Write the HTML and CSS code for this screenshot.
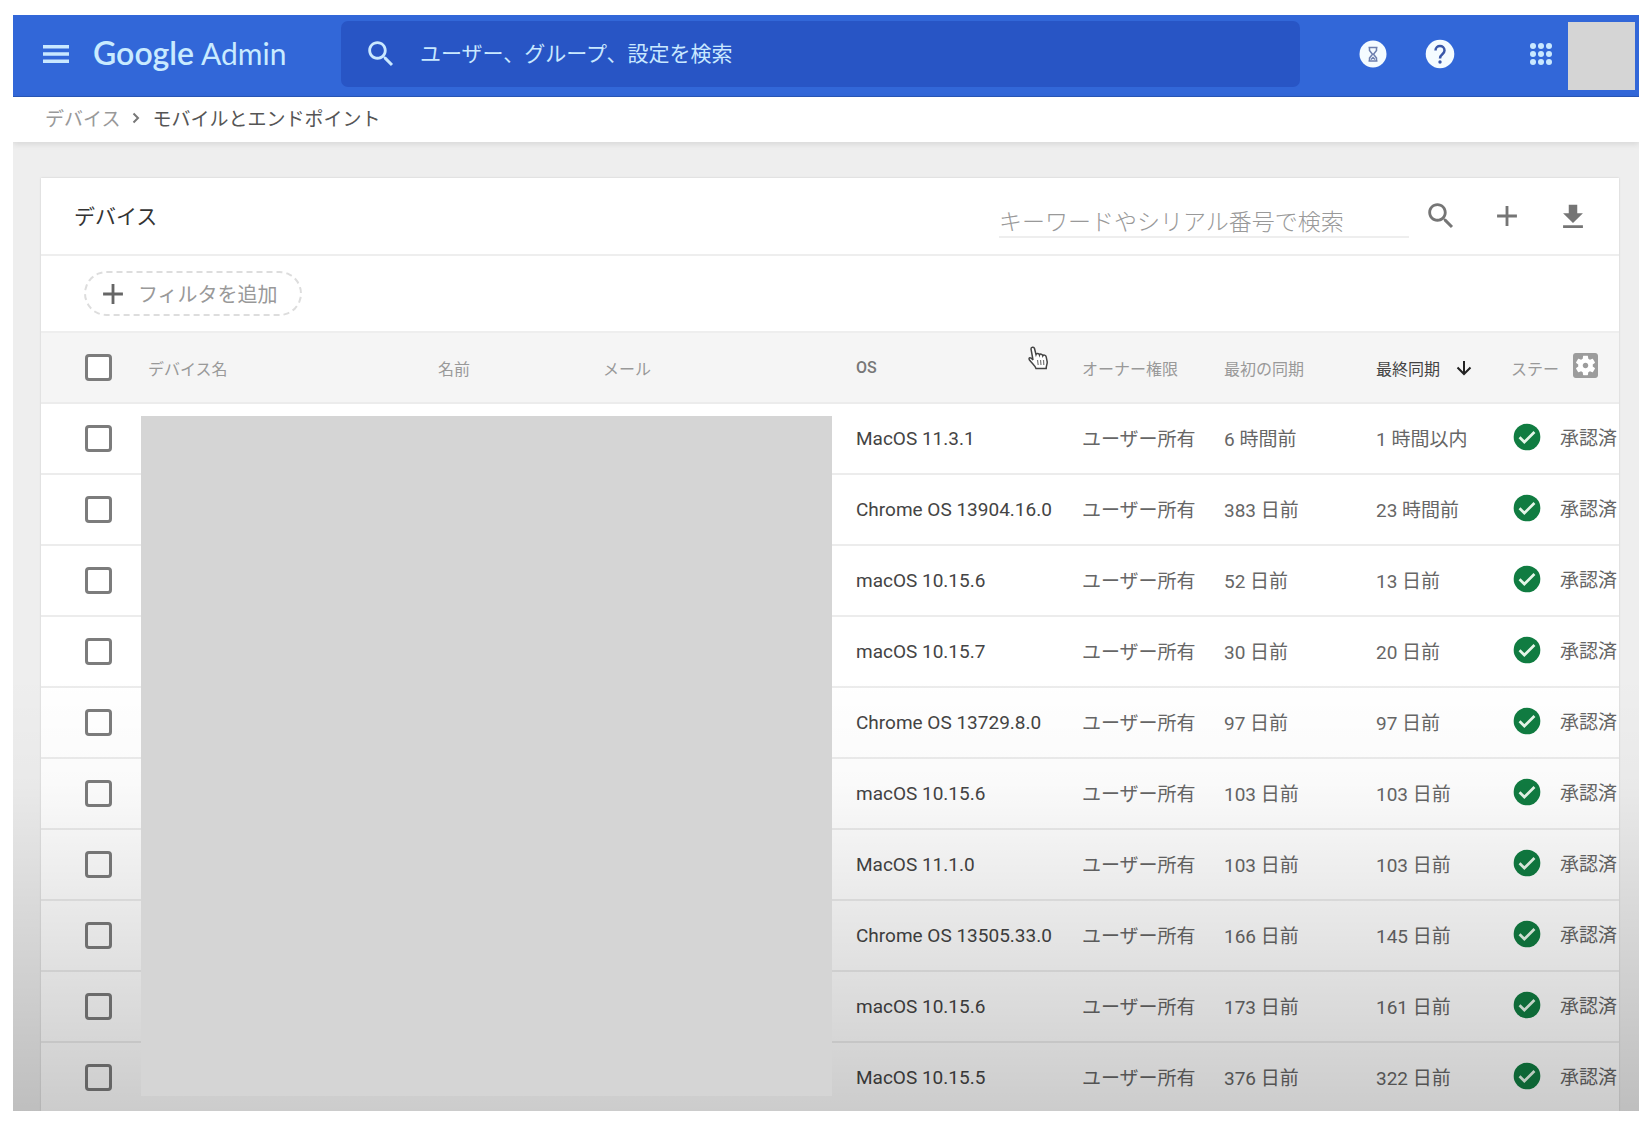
FILE: index.html
```html
<!DOCTYPE html>
<html lang="ja">
<head>
<meta charset="utf-8">
<title>デバイス - Google Admin</title>
<link rel="stylesheet" href="styles.css">
</head>
<body>
<svg class="sprite" aria-hidden="true">
  <symbol id="search" viewBox="0 0 24 24"><path d="M15.5 14h-.79l-.28-.27C15.41 12.59 16 11.11 16 9.5 16 5.91 13.09 3 9.5 3S3 5.91 3 9.5 5.91 16 9.5 16c1.61 0 3.09-.59 4.23-1.57l.27.28v.79l5 4.99L20.49 19l-4.99-5zm-6 0C7.01 14 5 11.99 5 9.5S7.01 5 9.5 5 14 7.01 14 9.5 11.99 14 9.5 14z"/></symbol>
  <symbol id="plus" viewBox="0 0 24 24"><path d="M19 13h-6v6h-2v-6H5v-2h6V5h2v6h6z"/></symbol>
  <symbol id="check" viewBox="0 0 24 24"><circle cx="12" cy="12" r="10"/><path d="M6.4 12.2l3.600 3.600 7.600-7.600" fill="none" stroke="#e4f6e8" stroke-width="2"/></symbol>
</svg>
<div class="app">
  <header class="topbar">
    <div class="brand">
      <button class="icon-button" aria-label="メニュー"><svg class="icon" viewBox="0 0 34 34"><path d="M4 8h26v3.500H4zM4 15.300h26v3.500H4zM4 22.600h26v3.500H4z"/></svg></button>
      <a class="logo" href="#"><span class="logo-google">Google</span><span class="logo-admin">Admin</span></a>
    </div>
    <label class="global-search">
      <svg class="icon"><use href="#search"/></svg>
      <input type="text" aria-label="検索" placeholder="ユーザー、グループ、設定を検索">
    </label>
    <div class="actions">
      <button class="icon-button" aria-label="タスク"><svg class="icon" viewBox="0 0 34 34"><circle cx="17" cy="17" r="13.5" fill="#f4fbff"/><path d="M12.5 10.5h9M12.5 24h9M13.5 10.5v3l3 3.7-3 3.8v3M20.500 10.500v3l-3 3.700 3 3.800v3M15 22.500l2-2 2 2" fill="none" stroke="#6d7fae" stroke-width="1.500"/></svg></button>
      <button class="icon-button" aria-label="ヘルプ"><svg class="icon" viewBox="0 0 34 34"><circle cx="17" cy="17" r="14.3" fill="#f4fbff"/><path d="M12.500 13.500c0-6 9-6 9 0 0 4-4.500 3.500-4.500 8" fill="none" stroke="#3a57a8" stroke-width="2.500"/><circle cx="17" cy="25" r="1.700" fill="#3a57a8"/></svg></button>
      <button class="icon-button apps" aria-label="アプリ"><svg class="icon" viewBox="0 0 34 34"><circle cx="9" cy="9" r="3"/><circle cx="17" cy="9" r="3"/><circle cx="25" cy="9" r="3"/><circle cx="9" cy="17" r="3"/><circle cx="17" cy="17" r="3"/><circle cx="25" cy="17" r="3"/><circle cx="9" cy="25" r="3"/><circle cx="17" cy="25" r="3"/><circle cx="25" cy="25" r="3"/></svg></button>
      <div class="avatar"></div>
    </div>
  </header>
  <nav class="breadcrumb" aria-label="パンくずリスト">
    <a href="#">デバイス</a>
    <svg class="chevron" viewBox="0 0 8 12"><path d="M1.500 1.500L6 6l-4.500 4.500" fill="none" stroke="#777" stroke-width="2"/></svg>
    <span>モバイルとエンドポイント</span>
  </nav>
  <main class="content">
    <section class="card">
      <div class="card-head">
        <h1>デバイス</h1>
        <input class="keyword" type="text" aria-label="キーワード" placeholder="キーワードやシリアル番号で検索">
        <div class="tools">
          <button class="icon-button" aria-label="検索"><svg class="icon"><use href="#search"/></svg></button>
          <button class="icon-button" aria-label="追加"><svg class="icon"><use href="#plus"/></svg></button>
          <button class="icon-button" aria-label="ダウンロード"><svg class="icon" viewBox="0 0 24 24"><path d="M19 10h-4V4H9v6H5l7 7 7-7zM5 18.500v2h14v-2H5z"/></svg></button>
        </div>
      </div>
      <div class="filters">
        <button class="add-filter"><svg class="icon"><use href="#plus"/></svg>フィルタを追加</button>
      </div>
      <div class="table-area">
        <table class="devices">
          <colgroup><col class="c-check"><col><col class="c-name"><col class="c-mail"><col class="c-os"><col class="c-owner"><col class="c-first"><col class="c-last"><col class="c-status"></colgroup>
          <thead>
            <tr><th><input type="checkbox" aria-label="すべて選択"></th><th>デバイス名</th><th>名前</th><th>メール</th><th class="os-head">OS</th><th>オーナー権限</th><th>最初の同期</th>
              <th class="sorted"><span class="sort-label">最終同期<svg class="sort" viewBox="0 0 16 16"><path d="M8 1v13M1.500 7.500L8 14l6.500-6.500" fill="none" stroke="#222" stroke-width="2"/></svg></span></th>
              <th><span class="status-head">ステー<button class="icon-button settings" aria-label="列の設定"><svg class="gear" viewBox="3 3 18 18"><path fill="#fff" d="M5 5h14v14H5z"/><path fill="#9c9c9c" d="M12 10c-1.100 0-2 .9-2 2s.9 2 2 2 2-.9 2-2-.9-2-2-2zm7-7H5c-1.110 0-2 .9-2 2v14c0 1.100.89 2 2 2h14c1.110 0 2-.9 2-2V5c0-1.100-.89-2-2-2zm-1.750 9c0 .23-.02.46-.05.68l1.480 1.160c.13.11.17.3.08.45l-1.400 2.420c-.09.15-.27.21-.43.15l-1.740-.7c-.36.28-.76.51-1.180.69l-.26 1.850c-.03.17-.18.3-.35.3h-2.800c-.17 0-.32-.13-.35-.29l-.26-1.850c-.43-.18-.82-.41-1.180-.69l-1.740.7c-.16.06-.34 0-.43-.15l-1.400-2.420c-.09-.15-.05-.34.08-.45l1.480-1.160c-.03-.23-.05-.46-.05-.69 0-.23.02-.46.05-.68l-1.480-1.160c-.13-.11-.17-.3-.08-.45l1.400-2.420c.09-.15.27-.21.43-.15l1.740.7c.36-.28.76-.51 1.180-.69l.26-1.850c.03-.17.18-.3.35-.3h2.800c.17 0 .32.13.35.29l.26 1.850c.43.18.82.41 1.180.69l1.740-.7c.16-.06.34 0 .43.15l1.400 2.420c.09.15.05.34-.08.45l-1.480 1.160c.03.23.05.46.05.69z"/></svg></button></span></th></tr>
          </thead>
          <tbody>
            <tr><td><input type="checkbox" aria-label="選択"></td><td></td><td></td><td></td><td class="os">MacOS 11.3.1</td><td>ユーザー所有</td><td>6 時間前</td><td>1 時間以内</td><td><span class="status"><svg class="ok"><use href="#check"/></svg>承認済</span></td></tr>
            <tr><td><input type="checkbox" aria-label="選択"></td><td></td><td></td><td></td><td class="os">Chrome OS 13904.16.0</td><td>ユーザー所有</td><td>383 日前</td><td>23 時間前</td><td><span class="status"><svg class="ok"><use href="#check"/></svg>承認済</span></td></tr>
            <tr><td><input type="checkbox" aria-label="選択"></td><td></td><td></td><td></td><td class="os">macOS 10.15.6</td><td>ユーザー所有</td><td>52 日前</td><td>13 日前</td><td><span class="status"><svg class="ok"><use href="#check"/></svg>承認済</span></td></tr>
            <tr><td><input type="checkbox" aria-label="選択"></td><td></td><td></td><td></td><td class="os">macOS 10.15.7</td><td>ユーザー所有</td><td>30 日前</td><td>20 日前</td><td><span class="status"><svg class="ok"><use href="#check"/></svg>承認済</span></td></tr>
            <tr><td><input type="checkbox" aria-label="選択"></td><td></td><td></td><td></td><td class="os">Chrome OS 13729.8.0</td><td>ユーザー所有</td><td>97 日前</td><td>97 日前</td><td><span class="status"><svg class="ok"><use href="#check"/></svg>承認済</span></td></tr>
            <tr><td><input type="checkbox" aria-label="選択"></td><td></td><td></td><td></td><td class="os">macOS 10.15.6</td><td>ユーザー所有</td><td>103 日前</td><td>103 日前</td><td><span class="status"><svg class="ok"><use href="#check"/></svg>承認済</span></td></tr>
            <tr><td><input type="checkbox" aria-label="選択"></td><td></td><td></td><td></td><td class="os">MacOS 11.1.0</td><td>ユーザー所有</td><td>103 日前</td><td>103 日前</td><td><span class="status"><svg class="ok"><use href="#check"/></svg>承認済</span></td></tr>
            <tr><td><input type="checkbox" aria-label="選択"></td><td></td><td></td><td></td><td class="os">Chrome OS 13505.33.0</td><td>ユーザー所有</td><td>166 日前</td><td>145 日前</td><td><span class="status"><svg class="ok"><use href="#check"/></svg>承認済</span></td></tr>
            <tr><td><input type="checkbox" aria-label="選択"></td><td></td><td></td><td></td><td class="os">macOS 10.15.6</td><td>ユーザー所有</td><td>173 日前</td><td>161 日前</td><td><span class="status"><svg class="ok"><use href="#check"/></svg>承認済</span></td></tr>
            <tr><td><input type="checkbox" aria-label="選択"></td><td></td><td></td><td></td><td class="os">MacOS 10.15.5</td><td>ユーザー所有</td><td>376 日前</td><td>322 日前</td><td><span class="status"><svg class="ok"><use href="#check"/></svg>承認済</span></td></tr>
          </tbody>
        </table>
        <div class="redaction"></div>
        <svg class="pointer" viewBox="0 0 22 24"><path d="M6 14L4 3c0-2 3-2.500 3.500-.5L9 8.500c.5-1.500 3-1.500 3.500.5.500-1.500 3-1 3.300.8.700-1.300 3-.8 3.400 1l1 5c.3 2-1 3.500-1 6.700H9c-1-3-4-5-6.500-8.500C1 11.500 3.500 10.500 6 14z" fill="#fff" stroke="#444" stroke-width="1.500"/><path d="M10.500 14l.7 5M13.500 14l.5 5M16.500 14l.3 5" stroke="#777" stroke-width="1.200"/></svg>
      </div>
    </section>
  </main>
</div>
</body>
</html>
```
FILE: styles.css
```css
* { box-sizing: border-box; }

body {
  margin: 0;
  padding: 15px 11px 13px 13px;
  background: #fff;
  font-family: Roboto, "Noto Sans CJK JP", sans-serif;
  font-size: 19px;
  color: #666;
}

button, input { font: inherit; color: inherit; }

.sprite { position: absolute; width: 0; height: 0; }

.app {
  position: relative;
  display: flex;
  flex-direction: column;
  height: calc(100vh - 28px);
  overflow: hidden;
  background: #eee;
}

/* Shade that deepens toward the bottom of the screen */
.app::after {
  content: "";
  position: absolute;
  inset: 60% 0 0;
  z-index: 1;
  pointer-events: none;
  background: linear-gradient(rgba(0, 0, 0, 0), rgba(0, 0, 0, 0.02) 25%, rgba(0, 0, 0, 0.2));
}

.icon { display: block; width: 34px; height: 34px; fill: currentColor; }

.icon-button {
  display: block;
  padding: 0;
  border: 0;
  background: none;
}

.topbar {
  display: flex;
  flex: none;
  align-items: center;
  height: 82px;
  padding: 0 4px 4px 0;
  background: #3267d8;
  border-bottom: 1px solid #2857b8;
  color: #c9e8ff;
}

.brand {
  display: flex;
  align-items: center;
  gap: 20px;
  flex: none;
  width: 328px;
  padding-left: 26px;
}

.logo {
  display: flex;
  align-items: baseline;
  gap: 7px;
  padding-bottom: 2px;
  color: #c9ebff;
  font-family: Lato, sans-serif;
  line-height: 40px;
  text-decoration: none;
}

.logo-google { font-size: 32px; font-weight: 600; }
.logo-admin { font-size: 30px; }

.global-search {
  display: flex;
  flex: 1;
  align-items: center;
  gap: 22px;
  min-width: 0;
  height: 66px;
  padding-left: 23px;
  border-radius: 7px;
  background: #2855c5;
}

.global-search .icon { flex: none; }

.global-search input {
  flex: 1;
  min-width: 0;
  padding: 0;
  border: 0;
  background: none;
  font-size: 21px;
}

input::placeholder { color: inherit; opacity: 1; }

.actions {
  display: flex;
  align-items: center;
  gap: 33px;
  margin-left: 56px;
}

.apps { margin-left: 34px; }
.avatar { width: 67px; height: 68px; margin: 4px 0 0 -23px; background: #d5d5d5; }

.breadcrumb {
  display: flex;
  flex: none;
  align-items: center;
  gap: 12px;
  height: 45px;
  padding: 0 32px 4px;
  background: #fff;
  box-shadow: 0 2px 6px rgba(0, 0, 0, 0.1);
  color: #555;
}

.breadcrumb a { color: #999; text-decoration: none; }
.chevron { width: 8px; height: 12px; }

.content {
  display: flex;
  flex: 1;
  min-height: 0;
  padding: 36px 20px 0 28px;
}

.card {
  display: flex;
  flex: 1;
  flex-direction: column;
  min-width: 0;
  background: #fff;
  box-shadow: 0 0 2px rgba(0, 0, 0, 0.15);
}

.card-head {
  display: flex;
  flex: none;
  align-items: center;
  height: 78px;
  padding: 0 29px 0 33px;
  border-bottom: 2px solid #eee;
}

h1 {
  flex: 1;
  margin: 0;
  padding-bottom: 3px;
  font-size: 21px;
  font-weight: 400;
  color: #333;
}

.keyword {
  width: 410px;
  height: 30px;
  margin-top: 14px;
  padding: 0;
  border: 0;
  border-bottom: 2px solid #eee;
  background: none;
  font-size: 23px;
  font-weight: 300;
  color: #999;
}

.tools { display: flex; gap: 32px; margin-left: 15px; color: #757575; }

.filters {
  display: flex;
  flex: none;
  align-items: center;
  height: 75px;
  padding-left: 43px;
}

.add-filter {
  display: flex;
  align-items: center;
  gap: 8px;
  height: 45px;
  padding: 0 22px 0 10px;
  border: 2px dashed #ddd;
  border-radius: 23px;
  background: none;
  font-size: 20px;
  color: #999;
}

.add-filter .icon { color: #666; }

.table-area {
  position: relative;
  flex: 1;
  min-height: 0;
}

.devices {
  width: 100%;
  table-layout: fixed;
  border-collapse: collapse;
}

.c-check { width: 107px; }
.c-name { width: 165px; }
.c-mail { width: 253px; }
.c-os { width: 226px; }
.c-owner { width: 142px; }
.c-first { width: 152px; }
.c-last { width: 135px; }
.c-status { width: 108px; }

th, td {
  height: 71px;
  padding: 0;
  border-bottom: 2px solid #ececec;
  text-align: left;
  white-space: nowrap;
}

td:nth-child(n + 6) { padding-bottom: 2px; }
td:last-child { padding-bottom: 4px; }

th {
  border-top: 2px solid #eee;
  background: #f5f5f5;
  font-size: 16px;
  font-weight: 400;
  color: #999;
}

.os-head { font-weight: 500; color: #777; }
.sorted { color: #444; }
.os { color: #444; }

input[type="checkbox"] {
  display: block;
  appearance: none;
  width: 27px;
  height: 27px;
  margin: 0 0 0 44px;
  border: 3px solid #7c7c7c;
  border-radius: 4px;
}

th input[type="checkbox"] { background: #fff; }

.sort-label { display: flex; align-items: center; gap: 16px; }
.sort { width: 16px; height: 16px; }

.status-head { display: flex; align-items: center; gap: 14px; }
.settings { padding-bottom: 5px; }
.gear { display: block; width: 25px; height: 25px; }

.status { display: flex; align-items: center; gap: 17px; }
.ok { width: 32px; height: 32px; fill: #107c41; }

/* Blanked-out personal data, above the shade */
.redaction {
  position: absolute;
  inset: 85px 787px 15px 100px;
  z-index: 2;
  background: #d5d5d5;
}

.pointer {
  position: absolute;
  top: 15px;
  right: 570px;
  width: 22px;
  height: 24px;
}
```
